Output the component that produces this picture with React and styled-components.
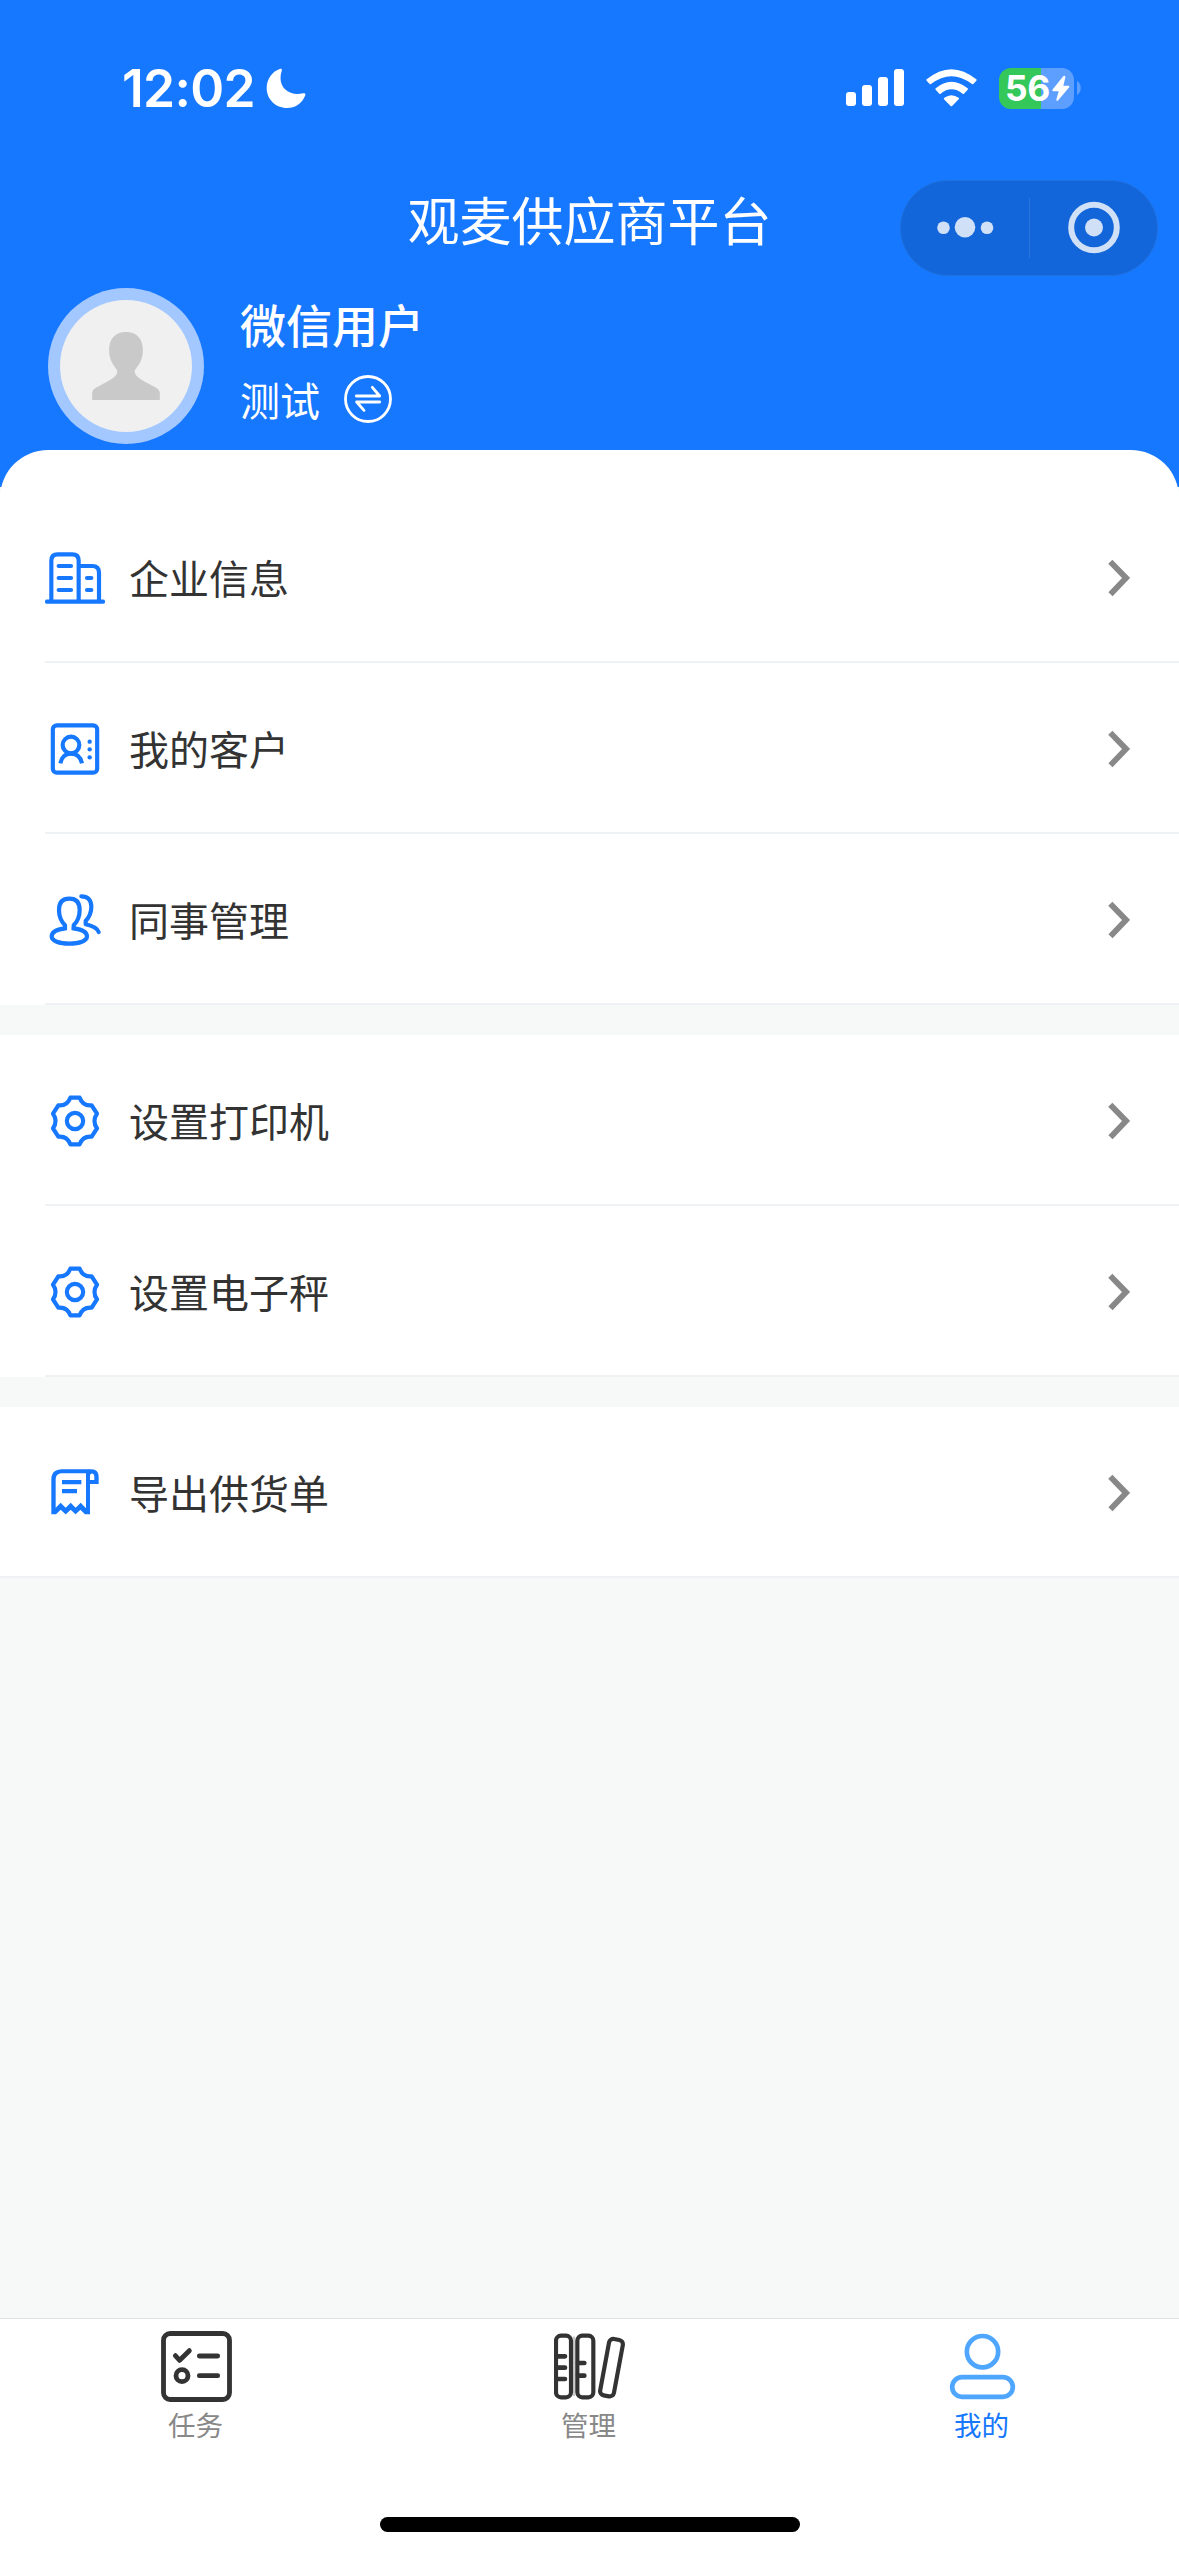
import React from "react";
import styled, { createGlobalStyle } from "styled-components";

const BLUE = "#1677ff";

const GlobalStyle = createGlobalStyle`
  body { margin: 0; background: #f7f9f8; }
  * { box-sizing: border-box; }
  svg { display: block; flex: none; }
`;

const Screen = styled.div`
  width: 1179px;
  height: 2556px;
  display: flex;
  flex-direction: column;
  background: #f7f9f8;
  overflow: hidden;
  font-family: "Noto Sans CJK SC", sans-serif;
  color: #333;
`;

const Header = styled.header`
  height: 487px;
  flex: none;
  background: ${BLUE};
  color: #fff;
`;

const StatusBar = styled.div`
  height: 180px;
  padding: 67px 98px 0 122px;
  display: flex;
  justify-content: space-between;
  align-items: flex-start;
  font-family: Inter, sans-serif;
`;

const StatusGroup = styled.div`
  height: 42px;
  display: flex;
  align-items: center;
  gap: ${(p) => p.$gap}px;
`;

const Time = styled.span`
  width: 134px;
  font-size: 51.5px;
  font-weight: 600;
  line-height: 42px;
  letter-spacing: -0.7px;
  white-space: nowrap;
`;

const Battery = styled.div`
  width: 75px;
  height: 41px;
  border-radius: 12px;
  display: flex;
  align-items: center;
  padding-left: 6px;
  gap: 2px;
  background: linear-gradient(to right, #34c759 42px, #5c9fff 42px);
  font-size: 35.5px;
  font-weight: 700;
  line-height: 41px;
  letter-spacing: -0.5px;
`;

const NavBar = styled.div`
  height: 96px;
  display: grid;
  grid-template-columns: 1fr auto 1fr;
  align-items: center;
  padding: 0 21px;
`;

const Title = styled.h1`
  grid-column: 2;
  margin: 0 0 19px;
  font-size: 52px;
  font-weight: 400;
  line-height: 60px;
`;

const Capsule = styled.div`
  justify-self: end;
  width: 258px;
  height: 96px;
  border-radius: 48px;
  border: 1px solid #2070dc;
  background: #1266da;
  display: flex;
  align-items: center;
  justify-content: center;
`;

const Profile = styled.section`
  display: flex;
  align-items: center;
  gap: 36px;
  padding: 12px 48px 0;
`;

const Avatar = styled.div`
  width: 156px;
  height: 156px;
  border-radius: 50%;
  background: #a2c8ff;
  display: grid;
  place-items: center;
`;

const AvatarFace = styled.div`
  width: 132px;
  height: 132px;
  border-radius: 50%;
  background: #f0f0f0;
  display: flex;
  justify-content: center;
  align-items: center;
`;

const UserInfo = styled.div`
  display: flex;
  flex-direction: column;
  gap: 18px;
  padding-bottom: 12px;
`;

const UserName = styled.div`
  font-size: 46px;
  font-weight: 500;
  line-height: 60px;
`;

const Company = styled.div`
  display: flex;
  align-items: center;
  gap: 24px;
  font-size: 40px;
  line-height: 56px;
`;

const Menu = styled.main`
  flex: 1;
  margin-top: -37px;
`;

const Group = styled.section`
  background: #fff;
  padding-top: ${(p) => (p.$first ? 42 : 0)}px;
  border-radius: ${(p) => (p.$first ? "48px 48px 0 0" : "0")};
  margin-bottom: 30px;
`;

const Row = styled.div`
  height: 171px;
  padding: ${(p) => (p.$full ? "0 0 0 45px" : "0")};
  margin-left: ${(p) => (p.$full ? 0 : 45)}px;
  border-bottom: 2px solid #eff2f4;
`;

const RowBody = styled.div`
  height: 169px;
  padding: 3px 49px 0 0;
  display: flex;
  align-items: center;
`;

const RowLabel = styled.span`
  flex: 1;
  margin-left: 24px;
  padding-bottom: 3px;
  font-size: 40px;
  line-height: 58px;
`;

const TabBar = styled.nav`
  height: 238px;
  flex: none;
  display: flex;
  flex-direction: column;
  justify-content: space-between;
  align-items: center;
  padding-bottom: 24px;
  border-top: 1px solid #e0e2e1;
  background: #fff;
`;

const Tabs = styled.div`
  width: 100%;
  display: grid;
  grid-template-columns: repeat(3, 1fr);
  padding-top: 12px;
`;

const Tab = styled.div`
  display: flex;
  flex-direction: column;
  align-items: center;
  gap: 6px;
  color: ${(p) => (p.$active ? BLUE : "#888")};
`;

const TabLabel = styled.span`
  padding-right: 2px;
  font-size: 27.5px;
  line-height: 32px;
`;

const HomeIndicator = styled.div`
  width: 420px;
  height: 15px;
  border-radius: 8px;
  background: #000;
`;

const Moon = () => (
  <svg width="40" height="42" viewBox="496 81 120 126" fill="#fff">
    <path d="M537 87 C542 85 545 88 543 93 C536 115 540 135 553 148 C567 161 587 165 607 160 C613 159 616 162 613 168 C604 190 584 204 559 204 C525 204 498 178 498 144 C498 118 514 95 537 87Z" />
  </svg>
);

const Signal = () => (
  <svg width="58" height="38" viewBox="0 0 58 38" fill="#fff">
    <rect x="0" y="23" width="10" height="14" rx="3" />
    <rect x="16" y="16" width="10" height="21" rx="3" />
    <rect x="32" y="8" width="10" height="29" rx="3" />
    <rect x="48" y="0" width="10" height="37" rx="3" />
  </svg>
);

const Wifi = () => (
  <svg width="51" height="38" viewBox="318 86 153 114" fill="#fff">
    <path d="M320 117 Q394 56 469 117 Q471 119 469 121 L460 131 Q458 133 456 131 Q394 84 333 131 Q331 133 329 131 L320 121 Q318 119 320 117Z" />
    <path d="M347 144 Q394 105 443 144 Q445 146 443 148 L432 160 Q430 162 428 160 Q394 134 362 160 Q360 162 358 160 L347 148 Q345 146 347 144Z" />
    <path d="M373 172 Q394 157 416 172 Q419 174 416 177 L397 196 Q394 199 391 196 L372 177 Q370 174 373 172Z" />
  </svg>
);

const Bolt = () => (
  <svg width="18" height="27" viewBox="695 106 54 78" fill="#fff">
    <path d="M731 107 Q736 107 735 112 L729 137 H744 Q749 138 746 142 L713 181 Q708 185 708 178 L715 153 H699 Q694 152 697 148 L728 109Z" />
  </svg>
);

const BatteryNub = () => (
  <svg width="4" height="14" viewBox="0 0 4 14" fill="#5c9fff">
    <path d="M0 0 C5 3 5 11 0 14Z" />
  </svg>
);

const CapsuleGlyphs = () => (
  <svg width="256" height="94" viewBox="901 181 256 94">
    <g fill="#d0e0f7">
      <circle cx="943.5" cy="227.7" r="6.3" />
      <circle cx="965" cy="227.3" r="10.3" />
      <circle cx="987" cy="227.7" r="6.3" />
      <circle cx="1094" cy="227.5" r="9" />
    </g>
    <circle cx="1094" cy="227.5" r="22.8" fill="none" stroke="#d0e0f7" strokeWidth="6" />
    <path d="M1029.5 198V258" stroke="#2a76de" strokeWidth="1" />
  </svg>
);

const Person = () => (
  <svg width="68" height="68" viewBox="276 185 204 205" fill="#c9c9c9">
    <path d="M276 390 V370 C276 358 284 354 300 346 C325 332 351 322 352 303 C352 295 327 280 327 240 C327 206 345 185 378 185 C411 185 429 206 429 240 C429 280 404 295 404 303 C405 322 431 332 456 346 C472 354 480 358 480 370 V390Z" />
  </svg>
);

const SwitchIcon = () => (
  <svg width="48" height="48" viewBox="1032 315 144 144" fill="none" stroke="#fff" strokeWidth="8.5" strokeLinecap="round" strokeLinejoin="round">
    <circle cx="1104" cy="387" r="67.5" />
    <path d="M1069 378H1139L1117 352M1139 396H1070L1092 421" />
  </svg>
);

const RowSvg = ({ y, children }) => (
  <svg width="60" height="60" viewBox={`45 ${y} 180 180`} fill="none" stroke={BLUE} strokeWidth="12.5" strokeLinecap="round" strokeLinejoin="round">
    {children}
  </svg>
);

const BuildingIcon = () => (
  <RowSvg y={54}>
    <path d="M51 215H219M64 215V92Q64 73 83 73H127Q146 73 146 92V215M146 108H187Q207 108 207 128V215" />
    <path d="M86 108H123M86 144H123M86 180H123M171 144H184M171 180H184" />
  </RowSvg>
);

const ClientIcon = () => (
  <RowSvg y={567}>
    <rect x="68.500" y="586" width="133" height="142" rx="12" />
    <circle cx="123" cy="645" r="25" />
    <path strokeLinecap="butt" d="M91 700C94 682 106 671 123 671S152 682 156 700" />
    <g fill={BLUE} stroke="none">
      <circle cx="179" cy="635" r="6.500" />
      <circle cx="179" cy="658" r="6.500" />
      <circle cx="179" cy="682" r="6.500" />
    </g>
  </RowSvg>
);

const ColleagueIcon = () => (
  <RowSvg y={60}>
    <path strokeLinecap="butt" d="M105 181V166C93 154 87 140 87 120C87 97 98 86 118 86S149 97 149 120C149 140 143 154 131 166V181" />
    <path d="M105 175C82 178 65 186 65 199C65 213 88 221 118 221S171 213 171 199C171 186 154 178 131 175" />
    <path d="M154 79C173 79 184 90 184 110C184 132 177 142 167 153V163C184 167 202 173 206 186" />
  </RowSvg>
);

const GearIcon = () => (
  <RowSvg y={33}>
    <circle cx="135" cy="123" r="24.500" />
    <path d="M121 53H149C155 69 166 78 185 76L201 101C191 114 191 132 201 145L185 170C166 168 155 177 149 193H121C115 177 104 168 85 170L69 145C79 132 79 114 69 101L85 76C104 78 115 69 121 53Z" />
  </RowSvg>
);

const ReceiptIcon = () => (
  <RowSvg y={309}>
    <g fill={BLUE} stroke="none" fillRule="evenodd">
      <path d="M64 463V360C64 338 75 328 97 328H184C199 328 206 337 206 351V372H180V463H165L151 449L137 463H136.500L122 449L107.500 463H106.500L92 449L78 463ZM77 443L92 428L107 443L122 428L137 443L152 428L168 445V340H97C84 340 77 346 77 360ZM180 360H193V350C193 338 180 338 180 348Z" />
      <path d="M96 360H154V372.500H96ZM96 387H141V399.500H96Z" />
    </g>
  </RowSvg>
);

const Chevron = () => (
  <svg width="22" height="38" viewBox="0 0 22 38" fill="none" stroke="#888" strokeWidth="5.8">
    <path d="M2.300 2.700L18 18.900L2.500 35.200" />
  </svg>
);

const TaskIcon = () => (
  <svg width="71" height="71" viewBox="93 93 213 213" fill="none" stroke="#333" strokeWidth="14.5" strokeLinecap="round" strokeLinejoin="round">
    <rect x="100.500" y="100.500" width="198" height="198" rx="20" />
    <path d="M136 167L149 181L178 152M208 168H263M208 227H263" />
    <circle cx="156" cy="227" r="18" />
  </svg>
);

const BooksIcon = () => (
  <svg width="71" height="71" viewBox="72 93 213 213" fill="none" stroke="#333" strokeWidth="12.5" strokeLinecap="round">
    <path d="M132 112V286" stroke="#ccc" strokeWidth="6" />
    <rect x="78" y="107" width="45" height="185" rx="15" />
    <rect x="142" y="107" width="48" height="185" rx="15" />
    <path d="M80 169H105M80 203H105M80 237H105M144 189H163M144 227H163" strokeWidth="14" />
    <rect x="223.500" y="117" width="42" height="172" rx="13" transform="rotate(10.500 244.500 203)" />
  </svg>
);

const MineIcon = () => (
  <svg width="71" height="71" viewBox="81 93 213 213" fill="none" stroke="#4fa6ff" strokeWidth="14">
    <circle cx="187.500" cy="155" r="47" />
    <rect x="96.500" y="231.500" width="182" height="59" rx="29.500" />
  </svg>
);

const groups = [
  [
    { label: "企业信息", Icon: BuildingIcon },
    { label: "我的客户", Icon: ClientIcon },
    { label: "同事管理", Icon: ColleagueIcon },
  ],
  [
    { label: "设置打印机", Icon: GearIcon },
    { label: "设置电子秤", Icon: GearIcon },
  ],
  [{ label: "导出供货单", Icon: ReceiptIcon, full: true }],
];

const tabs = [
  { label: "任务", Icon: TaskIcon },
  { label: "管理", Icon: BooksIcon },
  { label: "我的", Icon: MineIcon, active: true },
];

export default function App() {
  return (
    <Screen>
      <GlobalStyle />
      <Header>
        <StatusBar>
          <StatusGroup $gap={10}>
            <Time>12:02</Time>
            <Moon />
          </StatusGroup>
          <StatusGroup $gap={22}>
            <Signal />
            <Wifi />
            <StatusGroup $gap={3}>
              <Battery>
                56
                <Bolt />
              </Battery>
              <BatteryNub />
            </StatusGroup>
          </StatusGroup>
        </StatusBar>
        <NavBar>
          <Title>观麦供应商平台</Title>
          <Capsule>
            <CapsuleGlyphs />
          </Capsule>
        </NavBar>
        <Profile>
          <Avatar>
            <AvatarFace>
              <Person />
            </AvatarFace>
          </Avatar>
          <UserInfo>
            <UserName>微信用户</UserName>
            <Company>
              测试
              <SwitchIcon />
            </Company>
          </UserInfo>
        </Profile>
      </Header>
      <Menu>
        {groups.map((rows, i) => (
          <Group key={i} $first={i === 0}>
            {rows.map(({ label, Icon, full }) => (
              <Row key={label} $full={full}>
                <RowBody>
                  <Icon />
                  <RowLabel>{label}</RowLabel>
                  <Chevron />
                </RowBody>
              </Row>
            ))}
          </Group>
        ))}
      </Menu>
      <TabBar>
        <Tabs>
          {tabs.map(({ label, Icon, active }) => (
            <Tab key={label} $active={active}>
              <Icon />
              <TabLabel>{label}</TabLabel>
            </Tab>
          ))}
        </Tabs>
        <HomeIndicator />
      </TabBar>
    </Screen>
  );
}
